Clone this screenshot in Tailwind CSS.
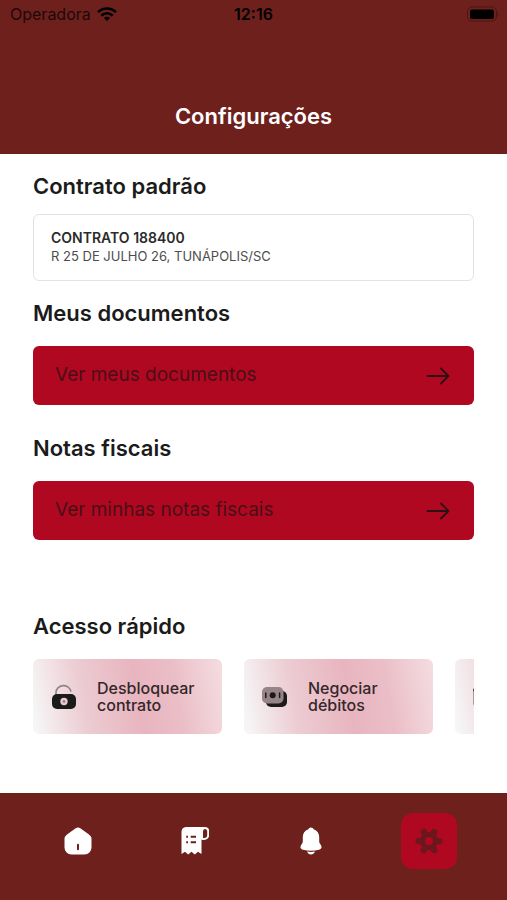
<!DOCTYPE html>
<html lang="pt-BR">
<head>
    <meta charset="UTF-8">
    <meta name="viewport" content="width=device-width, initial-scale=1.0">
    <title>Configurações</title>
    <script src="https://cdn.jsdelivr.net/npm/@tailwindcss/browser@4"></script>
</head>
<body class="min-h-screen flex flex-col bg-white text-[#1b1b1b] font-['Inter',sans-serif]">
    <header class="h-[154px] flex flex-col justify-between bg-[#6e201d] pb-6">
        <!-- Status bar -->
        <div class="grid grid-cols-3 items-center h-7 px-2 text-base text-black">
            <div class="flex items-center gap-[6px] pl-[2px]">
                <span class="text-black/75">Operadora</span>
                <svg class="w-5 h-[14px]" viewBox="0 0 20 14" fill="none" stroke="currentColor" stroke-width="2.6">
                    <path d="M1 5.2C6 .2 14 .2 19 5.2"/>
                    <path d="M4.3 8.7c3.3-3.2 8.1-3.2 11.4 0"/>
                    <path d="M10 14 6.9 10.9c1.8-1.7 4.4-1.7 6.2 0z" fill="currentColor" stroke="none"/>
                </svg>
            </div>
            <time class="text-center font-semibold">12:16</time>
            <svg class="w-8 h-4 justify-self-end" viewBox="0 0 32 16">
                <rect x=".5" y="1" width="29" height="14" rx="4.5" fill="none" stroke="#000" stroke-opacity=".3"/>
                <rect x="3" y="3.5" width="24" height="9.5" rx="2"/>
                <path d="M30.5 6c1.5.6 1.5 3.4 0 4z" fill-opacity=".3"/>
            </svg>
        </div>
        <h1 class="text-center text-[22px] leading-7 font-semibold text-white">Configurações</h1>
    </header>

    <main class="flex-1 px-[33px] pt-[18px]">
        <section>
            <h2 class="text-[22px] leading-7 font-semibold">Contrato padrão</h2>
            <div class="mt-[14px] border border-[#e2e2e2] rounded-md px-[17px] pt-[13px] pb-[14px]">
                <p class="text-[14px] leading-[19px] font-semibold text-[#2b2b2b]">CONTRATO 188400</p>
                <p class="text-[13px] leading-[19px] text-[#4d4d4d]">R 25 DE JULHO 26, TUNÁPOLIS/SC</p>
            </div>
        </section>

        <section class="mt-[18px]">
            <h2 class="text-[22px] leading-7 font-semibold">Meus documentos</h2>
            <button type="button" class="mt-[19px] w-full h-[59px] flex items-center justify-between rounded-md bg-[#b10821] pl-[22px] pr-6 text-[19px] text-[#4a0f16]">
                <span>Ver meus documentos</span>
                <svg class="w-6 h-5 text-[#2b1114]" viewBox="0 0 24 20" fill="none" stroke="currentColor" stroke-width="1.8" stroke-linecap="round" stroke-linejoin="round">
                    <path d="M1.5 10h21M15 2.5l7.5 7.5-7.5 7.5"/>
                </svg>
            </button>
        </section>

        <section class="mt-[29px]">
            <h2 class="text-[22px] leading-7 font-semibold">Notas fiscais</h2>
            <button type="button" class="mt-[19px] w-full h-[59px] flex items-center justify-between rounded-md bg-[#b10821] pl-[22px] pr-6 text-[19px] text-[#4a0f16]">
                <span>Ver minhas notas fiscais</span>
                <svg class="w-6 h-5 text-[#2b1114]" viewBox="0 0 24 20" fill="none" stroke="currentColor" stroke-width="1.8" stroke-linecap="round" stroke-linejoin="round">
                    <path d="M1.5 10h21M15 2.5l7.5 7.5-7.5 7.5"/>
                </svg>
            </button>
        </section>

        <section class="mt-[72px] pb-[58px]">
            <h2 class="text-[22px] leading-7 font-semibold">Acesso rápido</h2>
            <div class="mt-[19px] flex gap-[22px] overflow-hidden">
                <button type="button" class="shrink-0 w-[189px] h-[75px] flex items-center rounded-md bg-linear-[80deg,#f6f6f6_2%,#eccbd2_28%,#e8b5bf_55%,#ebbec7_75%,#f3dbe0_98%] pl-[18px] text-left text-base leading-[17px] text-[#35272a]">
                    <svg class="shrink-0 w-[26px] h-[26px] mr-5" viewBox="0 0 26 26">
                        <path d="M5 11V8.5a7.5 7 0 0 1 14.8-1.5" fill="none" stroke="#1b1b1b" stroke-opacity=".45" stroke-width="1.6" stroke-linecap="round"/>
                        <rect x="1" y="10" width="24" height="15" rx="5" fill="#1b1b1b"/>
                        <circle cx="13" cy="17.5" r="3.7" fill="#e9c9cf"/>
                        <circle cx="13" cy="17.5" r="1.3" fill="#8f7a7e"/>
                    </svg>
                    <span class="font-medium">Desbloquear<br>contrato</span>
                </button>
                <button type="button" class="shrink-0 w-[189px] h-[75px] flex items-center rounded-md bg-linear-[80deg,#f6f6f6_2%,#eccbd2_28%,#e8b5bf_55%,#ebbec7_75%,#f3dbe0_98%] pl-[18px] text-left text-base leading-[17px] text-[#35272a]">
                    <svg class="shrink-0 w-[26px] h-[26px] mr-5" viewBox="0 0 26 26">
                        <rect x="4" y="7" width="21" height="16" rx="5" fill="#1b1b1b"/>
                        <rect x="0" y="3" width="21.5" height="16.5" rx="5" fill="#978488"/>
                        <circle cx="10.7" cy="11.2" r="3" fill="#1b1b1b"/>
                        <path d="M3.800 9v4.400M17.600 9v4.400" stroke="#1b1b1b" stroke-width="1.5" stroke-linecap="round"/>
                    </svg>
                    <span class="font-medium">Negociar<br>débitos</span>
                </button>
                <button type="button" aria-label="Faturas" class="shrink-0 w-[189px] h-[75px] flex items-center rounded-md bg-linear-[80deg,#f6f6f6_2%,#eccbd2_28%,#e8b5bf_55%,#ebbec7_75%,#f3dbe0_98%] pl-[18px]">
                    <svg class="shrink-0 w-[26px] h-[26px]" viewBox="0 0 26 26">
                        <rect x="0" y="5" width="20" height="17" rx="3" fill="#a89b9d"/>
                        <rect x="0" y="4" width="20" height="4" rx="2" fill="#4a4042"/>
                    </svg>
                </button>
            </div>
        </section>
    </main>

    <nav class="h-[107px] grid grid-cols-4 justify-items-center items-start bg-[#6e201d] px-5 pt-5 text-white">
        <a href="#inicio" aria-label="Início" class="size-14 flex items-center justify-center">
            <svg class="size-7" viewBox="0 0 28 28" fill="currentColor">
                <path d="M11.7 1.2a4 4 0 0 1 4.6 0l8.7 6.2a6 6 0 0 1 2.5 4.7v8.4a7 7 0 0 1-7 7h-13a7 7 0 0 1-7-7v-8.4A6 6 0 0 1 3 7.4z"/>
                <path d="M14 17.8v4.5" stroke="#6e201d" stroke-width="2" stroke-linecap="round"/>
            </svg>
        </a>
        <a href="#faturas" aria-label="Faturas" class="size-14 flex items-center justify-center">
            <svg class="size-7" viewBox="0 0 28 28" fill="none">
                <path d="M5 0h18.5c-2.500 1-3 3-3 5.500V27l-3.500-2.300-3.200 2.800-3.300-2.800-3.300 2.800L4 24.700.5 27V5A5 5 0 0 1 5 0z" fill="currentColor"/>
                <path d="M20.500 12h2.700a4 4 0 0 0 4-4V4.600C27.200 2.300 25.700 1 23.800 1s-2.800 1.300-2.800 3.600V12" stroke="currentColor" stroke-width="2"/>
                <path d="M5.200 9.700h1.800M9.700 9.700h5.300M5.200 15.300h1.800M9.700 15.300h5.300" stroke="#6e201d" stroke-width="2"/>
            </svg>
        </a>
        <a href="#avisos" aria-label="Avisos" class="size-14 flex items-center justify-center">
            <svg class="size-7" viewBox="0 0 28 28" fill="currentColor">
                <path d="M13 .5c1.300 0 2.200.8 2.600 1.800 3.700 1.200 5.600 4.200 5.600 7.800v4.500c0 1 .5 1.800 1.300 2.900 2 2.900.8 4.600-1.500 5.200-5 1.400-11 1.400-16 0-2.300-.6-3.500-2.300-1.500-5.200.8-1.100 1.300-1.900 1.300-2.900v-4.500c0-3.600 1.900-6.600 5.600-7.800C10.800 1.300 11.700.5 13 .5z"/>
                <path d="M9 24.600c2.700.4 5.300.4 8 0-.7 1.900-2.200 2.900-4 2.900s-3.300-1-4-2.900z"/>
            </svg>
        </a>
        <a href="#configuracoes" aria-label="Configurações" aria-current="page" class="size-14 flex items-center justify-center rounded-xl bg-[#b10821] text-[#6b171d]">
            <svg class="size-7" viewBox="0 0 28 28" fill="none" stroke="currentColor">
                <circle cx="14" cy="14" r="6.500" stroke-width="5"/>
                <path d="M22 14h2.200M6 14H3.800M18 7.100l1.200-2.100M10 20.900 8.800 23M10 7.100 8.800 5M18 20.900l1.200 2.100" stroke-width="6.500" stroke-linecap="round"/>
            </svg>
        </a>
    </nav>
</body>
</html>
